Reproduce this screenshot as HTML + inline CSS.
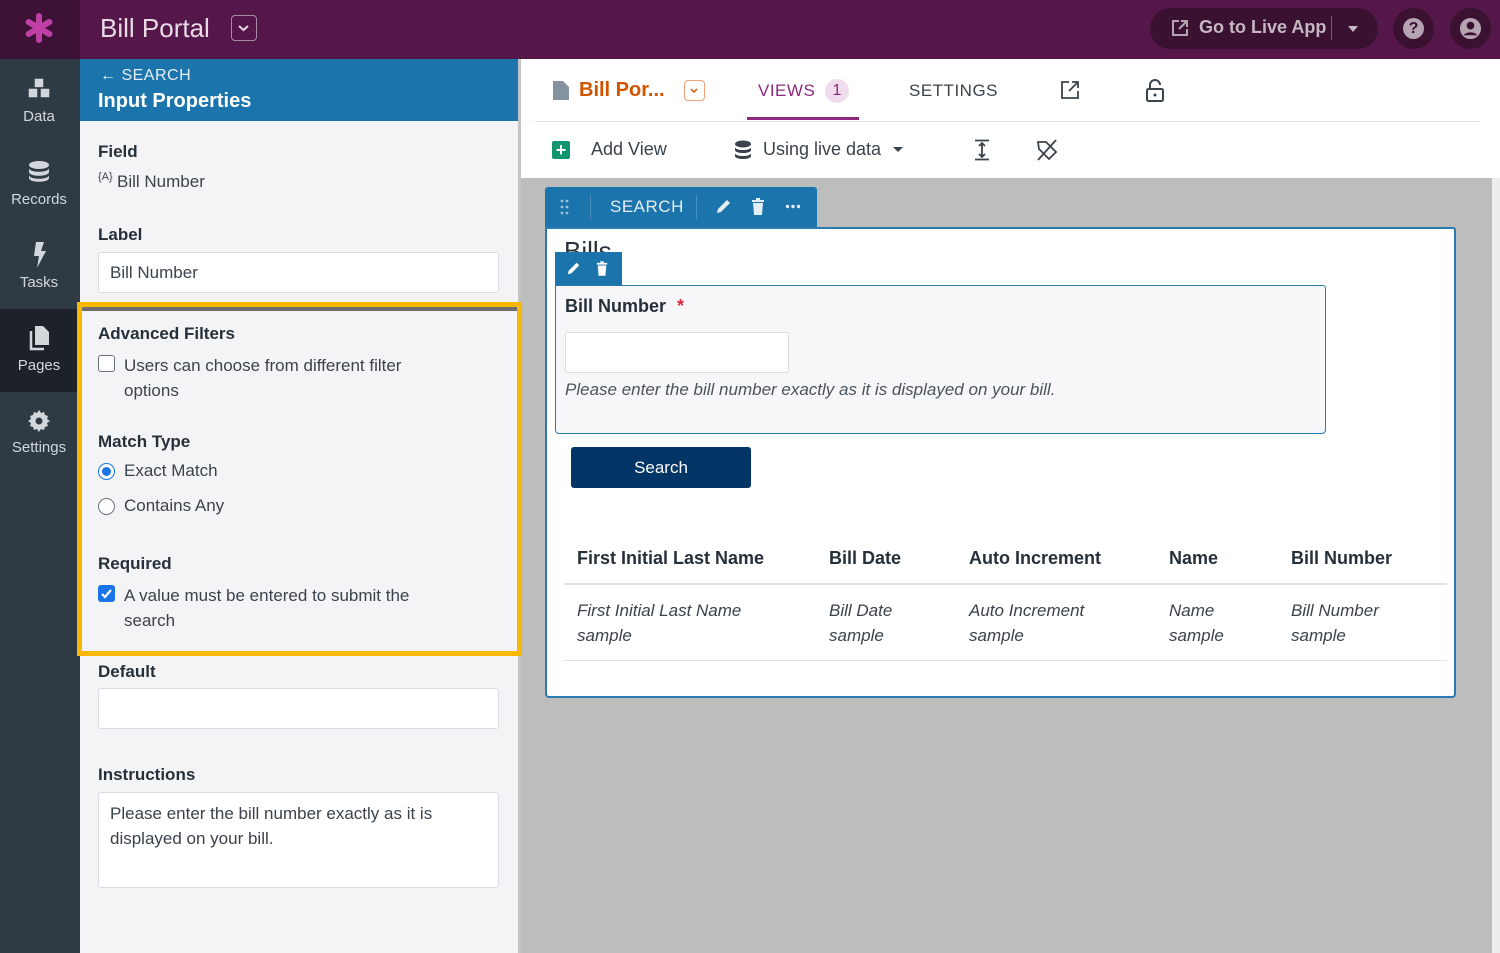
<!DOCTYPE html>
<html><head><meta charset="utf-8"><style>
*{box-sizing:border-box;margin:0;padding:0}
body{width:1500px;height:953px;overflow:hidden;font-family:"Liberation Sans",sans-serif;background:#bdbdbd;position:relative;color:#26303a}
.a{position:absolute}
.nav{left:0;top:59px;width:80px;height:894px;background:#2e3b45}
.ni{position:absolute;left:0;width:78px;text-align:center;color:#d3d7db;font-size:15px}
.lbl{font-weight:bold;font-size:17px;color:#26303a}
.txt{font-size:17px;color:#3a434c}
.inp{background:#fff;border:1px solid #d9dde2;border-radius:3px}
.th{font-weight:bold;font-size:18px;color:#26303a}
.td{font-style:italic;font-size:17px;color:#3a434c;line-height:25px}
</style></head><body>
<!-- top bar -->
<div class="a" style="left:0;top:0;width:1500px;height:59px;background:#55174a"></div>
<div class="a" style="left:0;top:0;width:80px;height:59px;background:#3d1236"></div>
<svg class="a" style="left:24px;top:13px" width="30" height="30" viewBox="0 0 30 30"><g stroke="#c03fa6" stroke-width="6" stroke-linecap="round"><path d="M15 3v24M4.6 9l20.8 12M4.6 21l20.8-12"/></g></svg>
<div class="a" style="left:100px;top:13px;font-size:26px;color:#e6dbe4">Bill Portal</div>
<div class="a" style="left:231px;top:15px;width:26px;height:26px;border:1.5px solid #a98aa3;border-radius:4px"><svg width="23" height="23" viewBox="0 0 23 23"><path d="M7 10l4.5 4 4.5-4" fill="none" stroke="#e6dbe4" stroke-width="2"/></svg></div>
<div class="a" style="left:1150px;top:8px;width:228px;height:41px;border-radius:21px;background:#3a1131"></div>
<svg class="a" style="left:1170px;top:18px" width="20" height="20" viewBox="0 0 20 20"><path d="M9 3H3v14h14v-6M11 3h6v6M17 3L9 11" fill="none" stroke="#b6a4b2" stroke-width="2"/></svg>
<div class="a" style="left:1199px;top:17px;font-size:18px;color:#c5b8c2;font-weight:bold">Go to Live App</div>
<div class="a" style="left:1331px;top:16px;width:1px;height:24px;background:#7a5a72"></div>
<div class="a" style="left:1348px;top:26px;border:5px solid transparent;border-top:6px solid #c5b8c2"></div>
<div class="a" style="left:1393px;top:8px;width:41px;height:41px;border-radius:50%;background:#3a1131"></div>
<div class="a" style="left:1403px;top:18px;width:21px;height:21px;border-radius:50%;background:#b6a4b2;color:#3a1131;font-weight:bold;font-size:16px;text-align:center;line-height:21px">?</div>
<div class="a" style="left:1450px;top:8px;width:41px;height:41px;border-radius:50%;background:#3a1131"></div>
<svg class="a" style="left:1459px;top:17px" width="23" height="23" viewBox="0 0 24 24"><circle cx="12" cy="12" r="11" fill="#b6a4b2"/><circle cx="12" cy="9" r="4" fill="#3a1131"/><path d="M5 19c2-4 12-4 14 0" fill="#3a1131"/></svg>
<!-- nav -->
<div class="a nav"></div>
<div class="a" style="left:0;top:309px;width:80px;height:83px;background:#1c2228"></div>
<div class="ni" style="top:76px"><svg width="28" height="26" viewBox="0 0 28 26"><g fill="#d3d7db" stroke="#2e3b45" stroke-width="1.5"><rect x="9" y="2" width="10" height="10" transform="rotate(0)"/><rect x="3" y="12" width="10" height="10"/><rect x="15" y="12" width="10" height="10"/></g></svg><div style="margin-top:2px">Data</div></div>
<div class="ni" style="top:160px"><svg width="24" height="24" viewBox="0 0 24 24"><ellipse cx="12" cy="5" rx="10" ry="4" fill="#d3d7db"/><path d="M2 8c0 5 20 5 20 0v4c0 5-20 5-20 0zM2 15c0 5 20 5 20 0v3c0 5-20 5-20 0z" fill="#d3d7db"/></svg><div style="margin-top:3px">Records</div></div>
<div class="ni" style="top:242px"><svg width="16" height="26" viewBox="0 0 16 26"><path d="M5 0h8l-3 9h5L6 26l2-12H3z" fill="#d3d7db"/></svg><div style="margin-top:2px">Tasks</div></div>
<div class="ni" style="top:325px"><svg width="22" height="26" viewBox="0 0 22 26"><path d="M7 1h8l6 6v13H7z" fill="#d3d7db"/><path d="M3 6v18h13" fill="none" stroke="#d3d7db" stroke-width="2.5"/></svg><div style="margin-top:2px">Pages</div></div>
<div class="ni" style="top:409px"><svg width="24" height="24" viewBox="0 0 24 24"><path d="M12 1l2 3 3-1 1 3 3 1-1 3 3 2-3 2 1 3-3 1-1 3-3-1-2 3-2-3-3 1-1-3-3-1 1-3-3-2 3-2-1-3 3-1 1-3 3 1z" fill="#d3d7db"/><circle cx="12" cy="12" r="3.5" fill="#2e3b45"/></svg><div style="margin-top:2px">Settings</div></div>
<!-- side panel -->
<div class="a" style="left:80px;top:59px;width:438px;height:894px;background:#f4f4f6"></div>
<div class="a" style="left:518px;top:59px;width:3px;height:894px;background:#c4c4c4"></div>
<div class="a" style="left:80px;top:59px;width:438px;height:62px;background:#1b74ab"></div>
<div class="a" style="left:100px;top:67px;font-size:16px;color:#e6eef5;letter-spacing:0.5px">&#8592; SEARCH</div>
<div class="a" style="left:98px;top:90px;font-size:20px;color:#fff;font-weight:bold">Input Properties</div>
<div class="a lbl" style="left:98px;top:142px">Field</div>
<div class="a" style="left:98px;top:171px;font-size:11px;color:#3a434c">{A}</div>
<div class="a txt" style="left:117px;top:172px">Bill Number</div>
<div class="a lbl" style="left:98px;top:225px">Label</div>
<div class="a inp" style="left:98px;top:252px;width:401px;height:41px"></div>
<div class="a txt" style="left:110px;top:263px">Bill Number</div>
<!-- highlighted -->
<div class="a" style="left:77px;top:302px;width:445px;height:354px;border:5px solid #f8b800"></div>
<div class="a" style="left:82px;top:307px;width:435px;height:4px;background:#6e6e6e"></div>
<div class="a lbl" style="left:98px;top:324px">Advanced Filters</div>
<div class="a" style="left:98px;top:355px;width:17px;height:17px;border:1.5px solid #6a7178;border-radius:3px;background:#fff"></div>
<div class="a txt" style="left:124px;top:353px;line-height:25px;width:310px">Users can choose from different filter options</div>
<div class="a lbl" style="left:98px;top:432px">Match Type</div>
<div class="a" style="left:98px;top:463px;width:17px;height:17px;border-radius:50%;border:1.5px solid #1a73e8;background:#fff"><div style="margin:2.5px;width:9px;height:9px;border-radius:50%;background:#1a73e8"></div></div>
<div class="a txt" style="left:124px;top:461px">Exact Match</div>
<div class="a" style="left:98px;top:498px;width:17px;height:17px;border-radius:50%;border:1.5px solid #6a7178;background:#fff"></div>
<div class="a txt" style="left:124px;top:496px">Contains Any</div>
<div class="a lbl" style="left:98px;top:554px">Required</div>
<div class="a" style="left:98px;top:585px;width:17px;height:17px;border-radius:3px;background:#1a73e8"><svg width="17" height="17" viewBox="0 0 17 17"><path d="M4 9l3 3 6-7" fill="none" stroke="#fff" stroke-width="2.2"/></svg></div>
<div class="a txt" style="left:124px;top:583px;line-height:25px;width:340px">A value must be entered to submit the search</div>
<div class="a lbl" style="left:98px;top:662px">Default</div>
<div class="a inp" style="left:98px;top:688px;width:401px;height:41px"></div>
<div class="a lbl" style="left:98px;top:765px">Instructions</div>
<div class="a inp" style="left:98px;top:792px;width:401px;height:96px"></div>
<div class="a txt" style="left:110px;top:801px;line-height:25px;width:370px">Please enter the bill number exactly as it is displayed on your bill.</div>
<!-- main header -->
<div class="a" style="left:521px;top:59px;width:979px;height:119px;background:#fff"></div>
<div class="a" style="left:535px;top:121px;width:945px;height:1px;background:#e3e3e3"></div>
<svg class="a" style="left:552px;top:80px" width="18" height="21" viewBox="0 0 18 21"><path d="M1 1h10l6 6v13H1z" fill="#8592a0"/></svg>
<div class="a" style="left:579px;top:79px;font-size:20px;font-weight:bold;color:#d35400">Bill Por...</div>
<div class="a" style="left:684px;top:80px;width:21px;height:21px;border:1.5px solid #f0a07a;border-radius:4px"><svg width="18" height="18" viewBox="0 0 18 18"><path d="M6 8l3 3 3-3" fill="none" stroke="#d35400" stroke-width="1.5"/></svg></div>
<div class="a" style="left:758px;top:81px;font-size:17px;color:#8e2a7e;letter-spacing:0.5px">VIEWS</div>
<div class="a" style="left:825px;top:79px;width:24px;height:24px;border-radius:50%;background:#f0dcec;color:#8e2a7e;text-align:center;line-height:24px;font-size:16px">1</div>
<div class="a" style="left:747px;top:117px;width:112px;height:3px;background:#8e2a7e"></div>
<div class="a" style="left:909px;top:81px;font-size:17px;color:#3a434c;letter-spacing:0.5px">SETTINGS</div>
<svg class="a" style="left:1060px;top:80px" width="20" height="20" viewBox="0 0 20 20"><path d="M9 2H2v16h16v-7M12 2h6v6M18 2L9 11" fill="none" stroke="#3a434c" stroke-width="1.8"/></svg>
<svg class="a" style="left:1145px;top:79px" width="20" height="23" viewBox="0 0 20 23"><path d="M5 10V6a5 5 0 0 1 10 0" fill="none" stroke="#3a434c" stroke-width="2"/><rect x="2" y="10" width="16" height="12" rx="1.5" fill="none" stroke="#3a434c" stroke-width="2"/><circle cx="10" cy="16" r="1.5" fill="#3a434c"/></svg>
<div class="a" style="left:552px;top:141px;width:18px;height:18px;background:#109570;border-radius:2px;color:#fff;font-weight:bold;text-align:center;line-height:18px;font-size:18px">+</div>
<div class="a" style="left:591px;top:139px;font-size:18px;color:#3a434c">Add View</div>
<svg class="a" style="left:734px;top:140px" width="18" height="20" viewBox="0 0 18 20"><ellipse cx="9" cy="4" rx="8" ry="3.5" fill="#3a434c"/><path d="M1 7c0 4 16 4 16 0v3c0 4-16 4-16 0zM1 13c0 4 16 4 16 0v3c0 4-16 4-16 0z" fill="#3a434c"/></svg>
<div class="a" style="left:763px;top:139px;font-size:18px;color:#3a434c">Using live data</div>
<div class="a" style="left:893px;top:147px;border:5px solid transparent;border-top:5px solid #3a434c"></div>
<svg class="a" style="left:972px;top:139px" width="20" height="22" viewBox="0 0 20 22"><path d="M3 1.5h14M3 20.5h14M10 4v14M7 7l3-3 3 3M7 15l3 3 3-3" fill="none" stroke="#3a434c" stroke-width="1.8"/></svg>
<svg class="a" style="left:1035px;top:139px" width="24" height="22" viewBox="0 0 24 22"><path d="M3 3h8l10 10-7 7L4 10z" fill="none" stroke="#3a434c" stroke-width="1.8"/><path d="M21 1L3 21" stroke="#3a434c" stroke-width="1.8"/></svg>
<div class="a" style="left:1492px;top:178px;width:8px;height:775px;background:#ececec"></div>
<!-- card -->
<div class="a" style="left:545px;top:187px;width:272px;height:41px;background:#1b74ab;border-radius:3px 3px 0 0"></div>
<svg class="a" style="left:560px;top:199px" width="10" height="16" viewBox="0 0 10 16"><g fill="#9cc3de"><circle cx="2" cy="2" r="1.4"/><circle cx="7" cy="2" r="1.4"/><circle cx="2" cy="8" r="1.4"/><circle cx="7" cy="8" r="1.4"/><circle cx="2" cy="14" r="1.4"/><circle cx="7" cy="14" r="1.4"/></g></svg>
<div class="a" style="left:590px;top:195px;width:1px;height:24px;background:#4a90bf"></div>
<div class="a" style="left:610px;top:197px;color:#e6eef5;font-size:17px;letter-spacing:0.5px">SEARCH</div>
<div class="a" style="left:696px;top:195px;width:1px;height:24px;background:#4a90bf"></div>
<svg class="a" style="left:715px;top:198px" width="17" height="17" viewBox="0 0 17 17"><path d="M2 15l1-4 9-9 3 3-9 9z" fill="#e6eef5"/></svg>
<svg class="a" style="left:751px;top:198px" width="14" height="17" viewBox="0 0 14 17"><path d="M1 2h12v2H1zM5 0h4v2H5zM2 5h10l-1 12H3z" fill="#e6eef5"/></svg>
<svg class="a" style="left:785px;top:204px" width="16" height="5" viewBox="0 0 16 5"><g fill="#e6eef5"><circle cx="2.5" cy="2.5" r="1.7"/><circle cx="8" cy="2.5" r="1.7"/><circle cx="13.5" cy="2.5" r="1.7"/></g></svg>
<div class="a" style="left:545px;top:227px;width:911px;height:471px;background:#fff;border:2px solid #2a7ab0;border-radius:0 3px 4px 4px"></div>
<div class="a" style="left:564px;top:234px;width:70px;height:20px;overflow:hidden"><div style="font-size:26px;color:#26303a;margin-top:2px">Bills</div></div>
<div class="a" style="left:555px;top:252px;width:67px;height:34px;background:#1b74ab"></div>
<svg class="a" style="left:566px;top:261px" width="15" height="15" viewBox="0 0 17 17"><path d="M2 15l1-4 9-9 3 3-9 9z" fill="#fff"/></svg>
<svg class="a" style="left:596px;top:261px" width="12" height="15" viewBox="0 0 14 17"><path d="M1 2h12v2H1zM5 0h4v2H5zM2 5h10l-1 12H3z" fill="#fff"/></svg>
<div class="a" style="left:555px;top:285px;width:771px;height:149px;background:#f7f7f9;border:1.5px solid #2a7ab0;border-radius:0 3px 4px 4px"></div>
<div class="a" style="left:565px;top:296px;font-weight:bold;font-size:18px;color:#26303a">Bill Number <span style="color:#e0243a;margin-left:6px">*</span></div>
<div class="a inp" style="left:565px;top:332px;width:224px;height:41px"></div>
<div class="a" style="left:565px;top:380px;font-style:italic;font-size:17px;color:#4a535c">Please enter the bill number exactly as it is displayed on your bill.</div>
<div class="a" style="left:571px;top:447px;width:180px;height:41px;background:#033566;border-radius:3px;color:#fff;text-align:center;line-height:41px;font-size:17px">Search</div>
<div class="a th" style="left:577px;top:548px">First Initial Last Name</div>
<div class="a th" style="left:829px;top:548px">Bill Date</div>
<div class="a th" style="left:969px;top:548px">Auto Increment</div>
<div class="a th" style="left:1169px;top:548px">Name</div>
<div class="a th" style="left:1291px;top:548px">Bill Number</div>
<div class="a" style="left:564px;top:583px;width:883px;height:2px;background:#e0e0e0"></div>
<div class="a td" style="left:577px;top:598px">First Initial Last Name<br>sample</div>
<div class="a td" style="left:829px;top:598px">Bill Date<br>sample</div>
<div class="a td" style="left:969px;top:598px">Auto Increment<br>sample</div>
<div class="a td" style="left:1169px;top:598px">Name<br>sample</div>
<div class="a td" style="left:1291px;top:598px">Bill Number<br>sample</div>
<div class="a" style="left:564px;top:660px;width:883px;height:1px;background:#e0e0e0"></div>
</body></html>
